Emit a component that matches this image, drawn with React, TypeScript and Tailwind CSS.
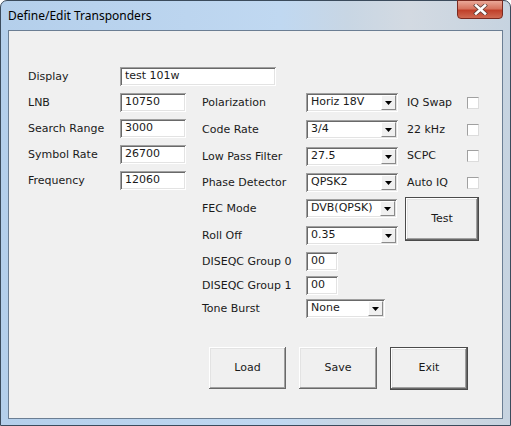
import type { ReactNode } from 'react';

const raised =
  'bg-[#f0f0f0] shadow-[inset_-1px_-1px_#696969,inset_1px_1px_#ffffff,inset_-2px_-2px_#a0a0a0,inset_2px_2px_#e3e3e3]';
const sunken =
  'bg-white shadow-[inset_1px_1px_#a0a0a0,inset_-1px_-1px_#ffffff,inset_2px_2px_#696969,inset_-2px_-2px_#e3e3e3]';

function TextBox({ value, w }: { value: string; w: string }) {
  return (
    <div className={`${sunken} ${w} h-[19px] flex items-center pl-[5px]`}>
      {value}
    </div>
  );
}

function Combo({ value, w }: { value: string; w: string }) {
  return (
    <div className={`${sunken} ${w} h-[19px] flex items-center p-[2px]`}>
      <span className="flex-1 pl-[3px]">{value}</span>
      <div className="w-[15px] h-full flex items-center justify-center bg-[#f0f0f0] border border-t-[#ffffff] border-l-[#ffffff] border-b-[#8a8a8a] border-r-[#8a8a8a]">
        <svg width="7" height="4" viewBox="0 0 7 4">
          <path d="M0 0h7L3.5 4z" fill="#000" />
        </svg>
      </div>
    </div>
  );
}

function Row({ label, lw, children, className = '' }: { label: string; lw: string; children: ReactNode; className?: string }) {
  return (
    <div className={`flex items-center h-[19px] ${className}`}>
      <span className={`${lw} shrink-0 pt-[1px]`}>{label}</span>
      {children}
    </div>
  );
}

function Check({ label, className = '' }: { label: string; className?: string }) {
  return (
    <div className={`flex items-center h-[19px] pl-[2px] ${className}`}>
      <span className="w-[60px] pt-[1px]">{label}</span>
      <div className="w-[12px] h-[12px] bg-white border border-t-[#a0a0a0] border-l-[#a0a0a0] border-b-[#dcdcdc] border-r-[#dcdcdc]" />
    </div>
  );
}

function Btn({ label, w, h, isDefault = false }: { label: string; w: string; h: string; isDefault?: boolean }) {
  return (
    <div className={`${w} ${h} ${isDefault ? 'border border-[#4a4a4a]' : ''} shrink-0`}>
      <div className={`${raised} w-full h-full flex items-center justify-center`}>{label}</div>
    </div>
  );
}

export default function App() {
  return (
    <div className="w-[511px] h-[426px] bg-white">
      <div className="w-full h-full flex flex-col rounded-t-[7px] border border-[#3b4b5c] px-[7px] pb-[6px] bg-[linear-gradient(to_right,#b4cfeb_0%,#c0d8f1_55%,#c8d6e4_68%,#d3dae2_80%,#c6d3e0_100%)]">
        <div className="h-[29px] flex justify-between shrink-0">
          <span className="self-center pt-[1px] text-[12px] text-black font-['Noto_Sans','DejaVu_Sans',sans-serif]">
            Define/Edit Transponders
          </span>
          <div className="w-[46px] h-[19px] -mt-[1px] rounded-b-[4px] border border-[#7a2a20] bg-[linear-gradient(to_bottom,#eaa898_0%,#d6745f_45%,#c0402a_55%,#cf6a52_100%)] flex items-center justify-center">
            <svg width="15" height="11" viewBox="0 0 15 11">
              <path d="M3 1.5l9 8M12 1.5l-9 8" stroke="#5a3a34" strokeWidth="4" strokeLinecap="square" />
              <path d="M3 1.5l9 8M12 1.5l-9 8" stroke="#ffffff" strokeWidth="2.6" strokeLinecap="square" />
            </svg>
          </div>
        </div>
        <div className="flex-1 border border-[#6b7e93] bg-[#f0f0f0] pl-[19px] pt-[36px] text-[11px] text-[#1a1a1a] font-['DejaVu_Sans','Verdana',sans-serif]">
          <Row label="Display" lw="w-[92px]">
            <TextBox value="test 101w" w="w-[156px]" />
          </Row>
          <div className="flex mt-[7px]">
            <div className="flex flex-col gap-[7px]">
              <Row label="LNB" lw="w-[92px]">
                <TextBox value="10750" w="w-[66px]" />
              </Row>
              <Row label="Search Range" lw="w-[92px]">
                <TextBox value="3000" w="w-[66px]" />
              </Row>
              <Row label="Symbol Rate" lw="w-[92px]">
                <TextBox value="26700" w="w-[66px]" />
              </Row>
              <Row label="Frequency" lw="w-[92px]">
                <TextBox value="12060" w="w-[66px]" />
              </Row>
            </div>
            <div className="flex flex-col ml-[16px]">
              <Row label="Polarization" lw="w-[104px]" className="mb-[8px]">
                <Combo value="Horiz 18V" w="w-[92px]" />
              </Row>
              <Row label="Code Rate" lw="w-[104px]" className="mb-[8px]">
                <Combo value="3/4" w="w-[92px]" />
              </Row>
              <Row label="Low Pass Filter" lw="w-[104px]" className="mb-[7px]">
                <Combo value="27.5" w="w-[92px]" />
              </Row>
              <Row label="Phase Detector" lw="w-[104px]" className="mb-[7px]">
                <Combo value="QPSK2" w="w-[92px]" />
              </Row>
              <Row label="FEC Mode" lw="w-[104px]" className="mb-[8px]">
                <Combo value="DVB(QPSK)" w="w-[91px]" />
              </Row>
              <Row label="Roll Off" lw="w-[104px]" className="mb-[7px]">
                <Combo value="0.35" w="w-[92px]" />
              </Row>
              <Row label="DISEQC Group 0" lw="w-[104px]" className="mb-[5px]">
                <TextBox value="00" w="w-[32px]" />
              </Row>
              <Row label="DISEQC Group 1" lw="w-[104px]" className="mb-[4px]">
                <TextBox value="00" w="w-[32px]" />
              </Row>
              <Row label="Tone Burst" lw="w-[104px]">
                <Combo value="None" w="w-[79px]" />
              </Row>
            </div>
            <div className="flex flex-col ml-[7px]">
              <Check label="IQ Swap" className="mb-[8px]" />
              <Check label="22 kHz" className="mb-[7px]" />
              <Check label="SCPC" className="mb-[8px]" />
              <Check label="Auto IQ" className="mb-[5px]" />
              <Btn label="Test" w="w-[74px]" h="h-[44px]" isDefault />
            </div>
          </div>
          <div className="flex gap-[13px] ml-[181px] mt-[29px]">
            <Btn label="Load" w="w-[77px]" h="h-[42px]" />
            <Btn label="Save" w="w-[78px]" h="h-[42px]" />
            <Btn label="Exit" w="w-[78px]" h="h-[43px]" isDefault />
          </div>
        </div>
      </div>
    </div>
  );
}
